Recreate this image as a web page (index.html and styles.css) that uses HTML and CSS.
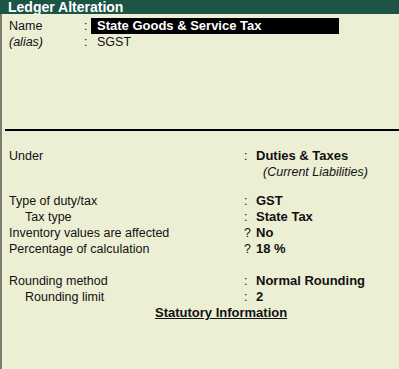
FILE: index.html
```html
<!DOCTYPE html>
<html>
<head>
<meta charset="utf-8">
<link rel="stylesheet" href="styles.css">
</head>
<body>
<div class="header">Ledger Alteration</div>
<div class="main">
  <div class="top">
    <div class="row">
      <span class="tlabel">Name</span>
      <span class="tcolon">:</span>
      <span class="namebox">State Goods &amp; Service Tax</span>
    </div>
    <div class="row">
      <span class="tlabel italic">(alias)</span>
      <span class="tcolon">:</span>
      <span class="alias">SGST</span>
    </div>
  </div>
  <div class="divider"></div>
  <div class="fields">
    <div class="row">
      <span class="label">Under</span>
      <span class="sep">:</span>
      <span class="value">Duties &amp; Taxes</span>
    </div>
    <div class="row">
      <span class="label"></span>
      <span class="sep"></span>
      <span class="sub">(Current Liabilities)</span>
    </div>

    <div class="group">
      <div class="row">
        <span class="label">Type of duty/tax</span>
        <span class="sep">:</span>
        <span class="value">GST</span>
      </div>
      <div class="row">
        <span class="label indent">Tax type</span>
        <span class="sep">:</span>
        <span class="value">State Tax</span>
      </div>
      <div class="row">
        <span class="label">Inventory values are affected</span>
        <span class="sep">?</span>
        <span class="value">No</span>
      </div>
      <div class="row">
        <span class="label">Percentage of calculation</span>
        <span class="sep">?</span>
        <span class="value">18 %</span>
      </div>
    </div>

    <div class="group">
      <div class="row">
        <span class="label">Rounding method</span>
        <span class="sep">:</span>
        <span class="value">Normal Rounding</span>
      </div>
      <div class="row">
        <span class="label indent">Rounding limit</span>
        <span class="sep">:</span>
        <span class="value">2</span>
      </div>
      <div class="row">
        <span class="statutory">Statutory Information</span>
      </div>
    </div>
  </div>
</div>
</body>
</html>
```

FILE: styles.css
```css
html, body {
  margin: 0;
  padding: 0;
  height: 100%;
}
body {
  background: #ecefd4;
  font-family: "Liberation Sans", Arial, sans-serif;
  font-size: 12.5px;
  color: #111;
  overflow: hidden;
}
.header {
  height: 14px;
  line-height: 14px;
  background: #1c5446;
  color: #fff;
  font-weight: bold;
  font-size: 14px;
  padding-left: 8px;
  white-space: nowrap;
}
.main {
  border-left: 2px solid #7c7d70;
  height: calc(100% - 14px);
  box-sizing: border-box;
}
.top {
  padding: 4px 0 0 7px;
}
.row {
  display: flex;
  align-items: center;
  height: 16px;
  line-height: 16px;
  white-space: nowrap;
}
.tlabel {
  width: 75px;
}
.italic {
  font-style: italic;
}
.tcolon {
  width: 7px;
}
.namebox {
  background: #000;
  color: #fff;
  font-weight: bold;
  font-size: 13px;
  width: 248px;
  box-sizing: border-box;
  padding-left: 6px;
  height: 16px;
}
.alias {
  padding-left: 6px;
}
.divider {
  margin: 79px 0 0 3px;
  height: 2px;
  background: #000;
}
.fields {
  padding: 17px 0 0 7px;
}
.label {
  width: 235px;
}
.indent {
  padding-left: 16px;
  box-sizing: border-box;
}
.sep {
  width: 12px;
}
.value {
  font-weight: bold;
  font-size: 13px;
}
.sub {
  font-style: italic;
  padding-left: 7px;
}
.group {
  margin-top: 13px;
}
.group + .group {
  margin-top: 16px;
}
.statutory {
  margin-left: 146px;
  font-weight: bold;
  font-size: 13px;
  text-decoration: underline;
}
```
